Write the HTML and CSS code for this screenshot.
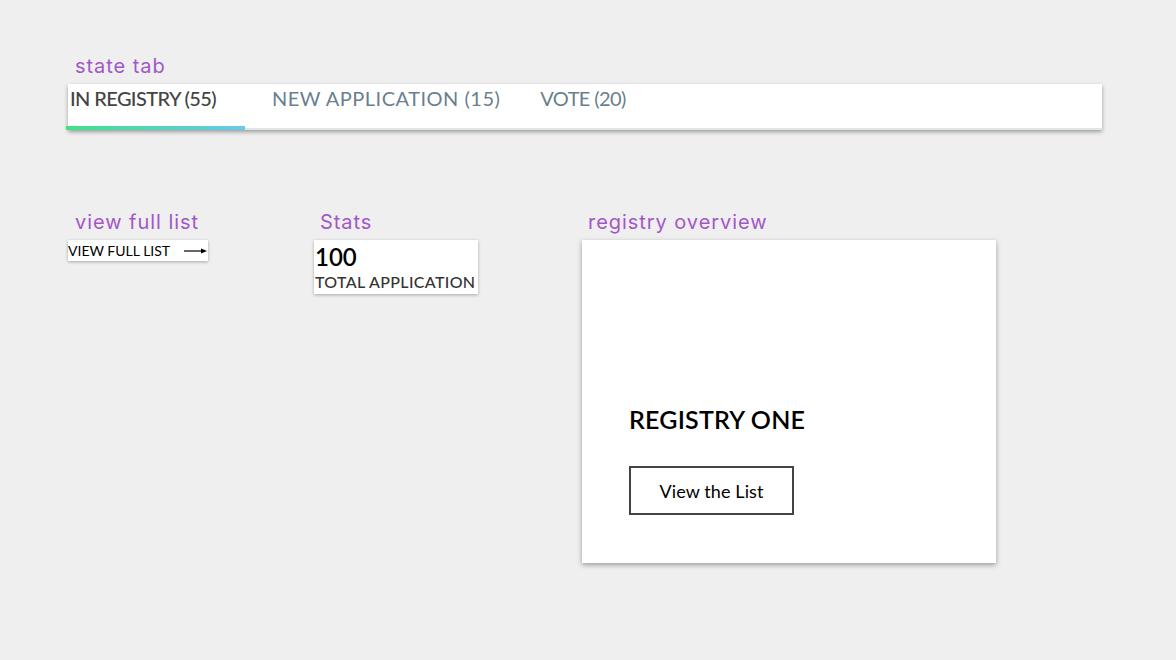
FILE: index.html
```html
<!DOCTYPE html>
<html>
<head>
<meta charset="utf-8">
<link rel="stylesheet" href="styles.css">
</head>
<body>
<div class="page">
  <section class="story story-tabs">
    <div class="label">state tab</div>
    <div class="tabbar">
      <div class="tab tab-active">IN REGISTRY (55)</div>
      <div class="tab tab-new">NEW APPLICATION (15)</div>
      <div class="tab tab-vote">VOTE (20)</div>
    </div>
  </section>

  <div class="row">
    <section class="story col-list">
      <div class="label">view full list</div>
      <div class="full-list">
        <span>VIEW FULL LIST</span>
        <svg class="arrow" width="23" height="6" viewBox="0 0 23 6"><line x1="0" y1="3" x2="19" y2="3" stroke="#000" stroke-width="1.2"/><polygon points="17,0.5 23,3 17,5.5" fill="#000"/></svg>
      </div>
    </section>
    <section class="story col-stats">
      <div class="label">Stats</div>
      <div class="stats">
        <div class="stats-num">100</div>
        <div class="stats-cap">TOTAL APPLICATION</div>
      </div>
    </section>
    <section class="story col-overview">
      <div class="label">registry overview</div>
      <div class="overview">
        <div class="overview-title">REGISTRY ONE</div>
        <button class="overview-btn">View the List</button>
      </div>
    </section>
  </div>
</div>
</body>
</html>
```

FILE: styles.css
```css
html, body {
  margin: 0;
  padding: 0;
  background: #efefef;
}
.page {
  padding: 53px 0 60px 68px;
  width: 1034px;
}
.label {
  font-family: Inter, "Noto Sans", sans-serif;
  font-size: 20px;
  line-height: 26px;
  color: #a257c8;
  padding-left: 7px;
  margin-bottom: 5px;
  letter-spacing: 0.95px;
}
.tabbar {
  position: relative;
  display: flex;
  height: 44px;
  background: #fff;
  box-shadow: 0 2px 4px rgba(0,0,0,0.35);
  border-bottom: 2px solid #dfe6ea;
  font-family: Lato, "Noto Sans", sans-serif;
  font-size: 20px;
}
.tab {
  position: relative;
  padding-top: 2px;
  line-height: 24px;
  color: #6a7f8e;
}
.tab-active {
  width: 175px;
  padding-left: 2px;
  color: #444;
  font-weight: 500;
  letter-spacing: -0.6px;
}
.tab-active::after {
  content: "";
  position: absolute;
  left: -2px;
  right: 0;
  bottom: -2px;
  height: 4px;
  background: linear-gradient(90deg, #3ee287, #6cc6ec);
}
.tab-new {
  margin-left: 27px;
  letter-spacing: 0.5px;
}
.tab-vote {
  margin-left: 40px;
  letter-spacing: -0.6px;
}
.row {
  display: flex;
  margin-top: 79px;
}
.col-list { width: 246px; }
.col-stats { width: 268px; }
.col-stats .label { padding-left: 6px; }
.col-overview .label { padding-left: 6px; }
.full-list {
  display: flex;
  align-items: center;
  width: 140px;
  height: 21px;
  background: #fff;
  box-shadow: 0 1px 3px rgba(0,0,0,0.3);
  font-family: Lato, "Noto Sans", sans-serif;
  font-size: 14px;
  color: #000;
}
.full-list span { flex: 1; }
.arrow { margin-right: 1px; }
.stats {
  width: 164px;
  height: 54px;
  background: #fff;
  box-shadow: 0 1px 3px rgba(0,0,0,0.3);
  font-family: Lato, "Noto Sans", sans-serif;
  padding-left: 1px;
  box-sizing: border-box;
}
.stats-num {
  font-size: 24px;
  line-height: 27px;
  padding-top: 3px;
  color: #000;
  font-weight: 600;
}
.stats-cap {
  font-size: 16px;
  line-height: 20px;
  margin-top: 2px;
  color: #333;
  letter-spacing: 0.35px;
  font-weight: 500;
}
.overview {
  width: 414px;
  height: 323px;
  box-sizing: border-box;
  background: #fff;
  box-shadow: 0 2px 5px rgba(0,0,0,0.35);
  display: flex;
  flex-direction: column;
  justify-content: flex-end;
  align-items: flex-start;
  padding: 0 0 48px 47px;
  font-family: Lato, "Noto Sans", sans-serif;
}
.overview-title {
  font-size: 25px;
  font-weight: 600;
  color: #000;
  letter-spacing: 0.2px;
  line-height: 28px;
  margin-bottom: 33px;
}
.overview-btn {
  width: 165px;
  height: 49px;
  border: 2px solid #444;
  background: #fff;
  font-family: Lato, "Noto Sans", sans-serif;
  font-size: 18px;
  letter-spacing: 0.1px;
  color: #000;
  padding: 0;
  margin: 0;
}
```
